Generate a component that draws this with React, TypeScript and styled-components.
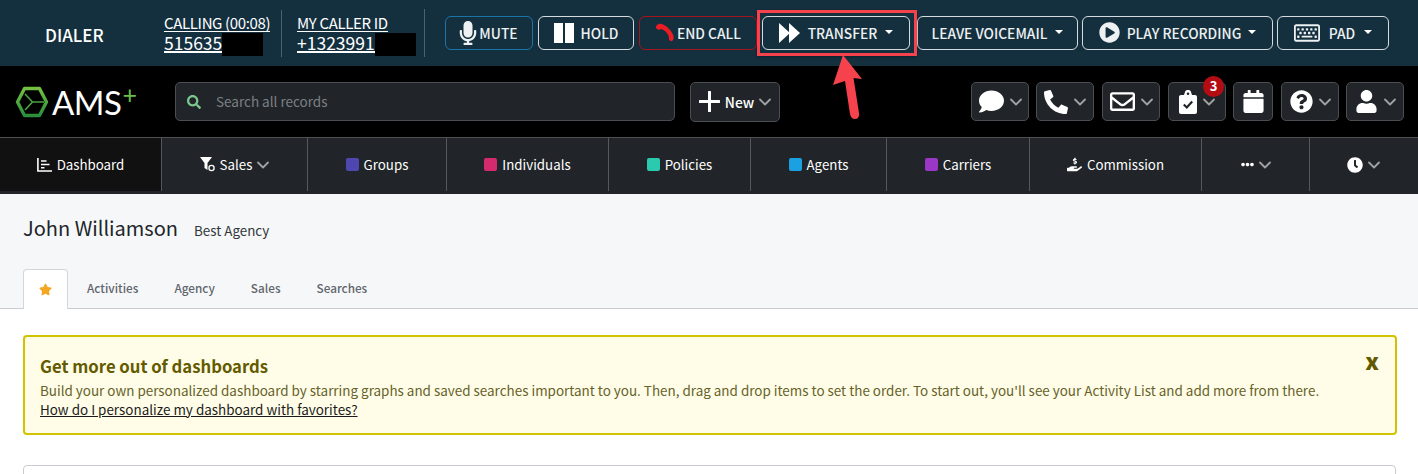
import React from "react";
import styled, { createGlobalStyle } from "styled-components";
import {
  FaCalendar,
  FaClock,
  FaComment,
  FaEllipsisH,
  FaHandHoldingUsd,
  FaMicrophone,
  FaPhone,
  FaPlayCircle,
  FaQuestionCircle,
  FaRegEnvelope,
  FaRegKeyboard,
  FaSearch,
  FaStar,
  FaUser,
} from "react-icons/fa";
import { ChevronDown } from "lucide-react";

const sans = `"Noto Sans CJK SC", "Source Sans Pro", "Noto Sans", sans-serif`;

const GlobalStyle = createGlobalStyle`
  html, body { margin: 0; padding: 0; background: #fff; }
  body { font-family: ${sans}; width: 1418px; height: 474px; overflow: hidden; }
  * { box-sizing: border-box; }
`;

const Page = styled.div`
  position: relative;
  width: 1418px;
  height: 474px;
  overflow: hidden;
`;

const DialerBar = styled.div`
  height: 66px;
  background: #14303f;
  display: flex;
  align-items: center;
  color: #fff;
`;

const DialerTitle = styled.div`
  width: 164px;
  padding-left: 45px;
  font-size: 17px;
  line-height: 20px;
  font-weight: 500;
  margin-top: 3px;
`;

const CallInfo = styled.div<{ $w: number }>`
  width: ${(p) => p.$w}px;
  height: 47px;
  padding-top: 4px;
  flex: none;
  & + & {
    border-left: 1px solid #4b626d;
    padding-left: 15px;
  }
`;

const InfoLabel = styled.div`
  font-size: 15px;
  letter-spacing: -0.35px;
  line-height: 18px;
  span {
    border-bottom: 1.5px solid #fff;
    display: inline-block;
    height: 18px;
  }
`;

const InfoValue = styled.div`
  display: flex;
  font-size: 17.5px;
  line-height: 21px;
  height: 22px;
  span {
    border-bottom: 2px solid #fff;
    height: 21px;
  }
`;

const Redacted = styled.i`
  display: block;
  width: 41px;
  height: 23px;
  margin-top: 1px;
  background: #000;
`;

const DialerDivider = styled.div`
  width: 1px;
  height: 48px;
  background: #4b626d;
  margin-right: 20px;
  flex: none;
`;

const CallButtons = styled.div`
  display: flex;
  gap: 5px;
  margin-top: -1px;
`;

const CallButton = styled.div<{ $w: number; $tone?: string; $gap?: number; $ml?: number }>`
  width: ${(p) => p.$w}px;
  height: 34px;
  flex: none;
  margin-left: ${(p) => p.$ml ?? 0}px;
  border: 1px solid ${(p) => p.$tone || "#d5dbde"};
  border-radius: 6px;
  display: flex;
  align-items: center;
  justify-content: center;
  gap: ${(p) => p.$gap ?? 8}px;
  font-size: 13.8px;
  font-weight: 500;
  color: #eef1f2;
  svg {
    flex: none;
  }
`;

const MicIcon = styled(FaMicrophone)`
  margin: 0 -4px;
`;

const Caret = styled.b`
  width: 0;
  height: 0;
  border-left: 4px solid transparent;
  border-right: 4px solid transparent;
  border-top: 4px solid #fff;
  margin-top: -2px;
`;

const HoldBars = styled.span`
  display: flex;
  gap: 2px;
  i {
    display: block;
    width: 9px;
    height: 20px;
    background: #fff;
  }
`;

const TopHeader = styled.div`
  height: 71px;
  background: #000;
  display: flex;
  align-items: center;
  padding-left: 15px;
`;

const Logo = styled.div`
  width: 160px;
  flex: none;
  display: flex;
  align-items: center;
  gap: 3px;
  color: #fff;
  font-family: Lato, sans-serif;
  font-size: 33px;
  line-height: 40px;
  letter-spacing: -0.5px;
`;

const LogoPlus = styled.span`
  color: #6cbd45;
  font-size: 25px;
  font-weight: 400;
  line-height: 20px;
  align-self: flex-start;
  margin: 2px 0 0 -2px;
`;

const SearchBox = styled.div`
  width: 500px;
  height: 39px;
  background: #212529;
  border: 1px solid #4a4e52;
  border-radius: 5px;
  display: flex;
  align-items: center;
  gap: 15px;
  padding: 0 0 2px 11px;
  color: #7c8084;
  font-size: 13.5px;
  svg {
    color: #7cc78d;
    margin-top: 2px;
  }
`;

const NewButton = styled.div`
  width: 90px;
  height: 40px;
  margin-left: 15px;
  background: #212529;
  border: 1px solid #4a4e52;
  border-radius: 5px;
  display: flex;
  align-items: center;
  justify-content: center;
  gap: 5px;
  color: #fff;
  font-size: 13.8px;
  font-weight: 500;
`;

const HeaderIcons = styled.div`
  margin-left: auto;
  margin-right: 14px;
  display: flex;
  gap: 7px;
`;

const IconButton = styled.div<{ $w?: number; $ml?: number }>`
  position: relative;
  width: ${(p) => p.$w ?? 58}px;
  height: 39px;
  margin-left: ${(p) => p.$ml ?? 0}px;
  background: #212529;
  border: 1px solid #4a4e52;
  border-radius: 5px;
  display: flex;
  align-items: center;
  justify-content: center;
  gap: 6px;
  color: #fff;
`;

const Badge = styled.span`
  position: absolute;
  top: -7px;
  right: 1px;
  width: 21px;
  height: 21px;
  border-radius: 50%;
  background: #b30d13;
  color: #fff;
  font-size: 13px;
  font-weight: 700;
  line-height: 20px;
  text-align: center;
`;

const FlippedPhone = styled(FaPhone)`
  transform: scaleX(-1);
`;

const Nav = styled.nav`
  height: 57px;
  background: #212529;
  border-top: 1px solid #4e5154;
  display: flex;
`;

const NavItem = styled.div<{ $w: number; $active?: boolean; $last?: boolean }>`
  width: ${(p) => p.$w}px;
  flex: none;
  height: 53px;
  display: flex;
  align-items: center;
  justify-content: center;
  gap: 5px;
  color: #fff;
  font-size: 13.3px;
  background: ${(p) => (p.$active ? "#111" : "transparent")};
  border-right: 1px solid ${(p) => (p.$last ? "transparent" : "#55585b")};
`;

const Swatch = styled.i<{ $color: string }>`
  display: block;
  width: 13px;
  height: 13px;
  border-radius: 2px;
  background: ${(p) => p.$color};
`;

const Subheader = styled.div`
  height: 115px;
  background: #f6f7f9;
  border-bottom: 1px solid #c9ccd0;
  padding: 0 23px;
  display: flex;
  flex-direction: column;
`;

const TitleRow = styled.div`
  display: flex;
  align-items: baseline;
  gap: 16px;
  margin-top: 19px;
  height: 30px;
  line-height: 30px;
`;

const PersonName = styled.h1`
  margin: 0;
  font-size: 20px;
  font-weight: 400;
  color: #212529;
`;

const AgencyName = styled.span`
  font-size: 13.4px;
  color: #33373b;
`;

const Tabs = styled.div`
  display: flex;
  margin-top: auto;
  height: 40px;
  margin-bottom: -1px;
`;

const Tab = styled.div<{ $active?: boolean }>`
  height: 37px;
  display: flex;
  align-items: center;
  justify-content: center;
  font-size: 11.75px;
  font-weight: 500;
  color: #5f656c;
  padding: 0 18px;
  ${(p) =>
    p.$active
      ? `width: 45px; height: 40px; padding: 0; background: #fff; border: 1px solid #d3d6da; border-bottom: none; border-radius: 4px 4px 0 0; color: #f5a623; margin-right: 1px;`
      : ""}
`;

const Alert = styled.section`
  position: relative;
  margin: 26px 21px 0 23px;
  height: 100px;
  background: #fffde7;
  border: 2px solid #d1c300;
  border-radius: 4px;
  padding: 17px 15px 0;
  color: #66622a;
`;

const AlertTitle = styled.h2`
  margin: 0 0 3px;
  font-size: 16.7px;
  line-height: 24px;
  font-weight: 700;
  color: #635a00;
`;

const AlertText = styled.p`
  margin: 0;
  font-size: 13.44px;
  line-height: 19px;
`;

const AlertLink = styled.a`
  display: block;
  font-size: 13.44px;
  line-height: 19px;
  color: #1b1b1b;
  text-decoration: underline;
`;

const CloseX = styled.span`
  position: absolute;
  top: 11px;
  right: 16px;
  font-size: 23px;
  line-height: 24px;
  font-weight: 900;
  color: #635a00;
`;

const NextCard = styled.div`
  margin: 30px 22px 0 23px;
  height: 40px;
  background: #fff;
  border: 1px solid #c9ccd0;
  border-radius: 4px;
`;

const Highlight = styled.div`
  position: absolute;
  left: 757px;
  top: 10px;
  width: 160px;
  height: 46px;
  border: 3px solid #f5424c;
  box-shadow: 0 1px 3px rgba(0, 0, 0, 0.35);
  pointer-events: none;
`;

const Arrow = styled.svg`
  position: absolute;
  left: 830px;
  top: 54px;
`;

const ChevronGlyph = styled(ChevronDown)`
  margin: 0 -4px;
  flex: none;
`;

const Chevron = () => <ChevronGlyph size={20} color="#a0a3a6" strokeWidth={2.2} />;

export default function App() {
  return (
    <Page>
      <GlobalStyle />
      <DialerBar>
        <DialerTitle>DIALER</DialerTitle>
        <CallInfo $w={117}>
          <InfoLabel>
            <span>CALLING (00:08)</span>
          </InfoLabel>
          <InfoValue>
            <span>515635</span>
            <Redacted />
          </InfoValue>
        </CallInfo>
        <CallInfo $w={143}>
          <InfoLabel>
            <span>MY CALLER ID</span>
          </InfoLabel>
          <InfoValue>
            <span>+1323991</span>
            <Redacted />
          </InfoValue>
        </CallInfo>
        <DialerDivider />
        <CallButtons>
          <CallButton $w={88} $tone="#1b74a8" $gap={3}>
            <MicIcon size={24} />
            MUTE
          </CallButton>
          <CallButton $w={96} $gap={7}>
            <HoldBars>
              <i />
              <i />
            </HoldBars>
            HOLD
          </CallButton>
          <CallButton $w={118} $tone="#a3141c" $gap={2}>
            <svg width="20" height="19" viewBox="0 0 20 19">
              <path
                d="M1 4 C1 2 4 0 7 1 C12 3 17 8 18.5 13 C19 15 18.5 17.5 17 18 C15 18.5 13.5 17 14 15 C14 12 11 8 7.5 6.5 C5 6 4 7 2.5 6.5 C1.5 6 1 5 1 4 Z"
                fill="#ec1c24"
              />
            </svg>
            END CALL
          </CallButton>
          <CallButton $w={148}>
            <svg width="21" height="20" viewBox="0 0 21 20">
              <path d="M0 0 L11 10 L0 20 Z M10 0 L21 10 L10 20 Z" fill="#fff" />
            </svg>
            TRANSFER
            <Caret />
          </CallButton>
          <CallButton $w={161} $ml={2}>
            LEAVE VOICEMAIL
            <Caret />
          </CallButton>
          <CallButton $w={191} $ml={-1} $gap={7}>
            <FaPlayCircle size={21} />
            PLAY RECORDING
            <Caret />
          </CallButton>
          <CallButton $w={112} $ml={-1} $gap={9}>
            <FaRegKeyboard size={26} />
            PAD
            <Caret />
          </CallButton>
        </CallButtons>
      </DialerBar>

      <TopHeader>
        <Logo>
          <svg width="34" height="32" viewBox="0 0 34 32">
            <defs>
              <linearGradient id="hexGreen" x1="0" y1="0" x2="0" y2="1">
                <stop offset="0" stopColor="#74c043" />
                <stop offset="1" stopColor="#2c8f3c" />
              </linearGradient>
            </defs>
            <path d="M9.5 2.5 H24.5 L31.5 16 L24.5 29.5 H9.5 L2.5 16 Z" fill="none" stroke="url(#hexGreen)" strokeWidth="3.4" strokeLinejoin="round" />
            <path d="M10 8 L17.5 16 L10 24 M17.5 16 H29" fill="none" stroke="#4aa33f" strokeWidth="1.6" />
          </svg>
          AMS
          <LogoPlus>+</LogoPlus>
        </Logo>
        <SearchBox>
          <FaSearch size={14} />
          Search all records
        </SearchBox>
        <NewButton>
          <svg width="21" height="21" viewBox="0 0 21 21">
            <path d="M10.5 1 V20 M1 10.5 H20" fill="none" stroke="#fff" strokeWidth="3" strokeLinecap="round" />
          </svg>
          New
          <Chevron />
        </NewButton>
        <HeaderIcons>
          <IconButton>
            <FaComment size={25} />
            <Chevron />
          </IconButton>
          <IconButton>
            <FlippedPhone size={24} />
            <Chevron />
          </IconButton>
          <IconButton $ml={1}>
            <FaRegEnvelope size={25} />
            <Chevron />
          </IconButton>
          <IconButton $ml={1}>
            <svg width="18" height="24" viewBox="0 0 18 24">
              <path
                fillRule="evenodd"
                d="M2 5 H5 L6 2 C6.3 0.6 7.5 0 9 0 C10.5 0 11.7 0.6 12 2 L13 5 H16 C17.2 5 18 5.8 18 7 V22 C18 23.2 17.2 24 16 24 H2 C0.8 24 0 23.2 0 22 V7 C0 5.8 0.8 5 2 5 Z M9 2.4 A1.3 1.3 0 1 0 9 5 A1.3 1.3 0 1 0 9 2.4 Z"
                fill="#fff"
              />
              <path d="M4.8 14.5 L7.8 17.5 L13.2 11.5" fill="none" stroke="#212529" strokeWidth="2.2" />
            </svg>
            <Chevron />
            <Badge>3</Badge>
          </IconButton>
          <IconButton $w={40}>
            <FaCalendar size={23} />
          </IconButton>
          <IconButton $ml={1}>
            <FaQuestionCircle size={23} />
            <Chevron />
          </IconButton>
          <IconButton>
            <FaUser size={23} />
            <Chevron />
          </IconButton>
        </HeaderIcons>
      </TopHeader>

      <Nav>
        <NavItem $w={162} $active>
          <svg width="15" height="14" viewBox="0 0 15 14">
            <path d="M0.9 0 V13 H15 M4 3 H9.5 M4 6.5 H12.5 M4 9.8 H7.5" fill="none" stroke="#fff" strokeWidth="1.6" />
          </svg>
          Dashboard
        </NavItem>
        <NavItem $w={146}>
          <svg width="15" height="15" viewBox="0 0 15 15">
            <path d="M0 0 H12 L7.5 6 V13 L4.5 11 V6 Z" fill="#fff" />
            <circle cx="11.5" cy="11" r="2.6" fill="none" stroke="#fff" strokeWidth="1.3" />
          </svg>
          Sales
          <Chevron />
        </NavItem>
        <NavItem $w={139}>
          <Swatch $color="#4e47b0" />
          Groups
        </NavItem>
        <NavItem $w={162}>
          <Swatch $color="#d62a6e" />
          Individuals
        </NavItem>
        <NavItem $w={142}>
          <Swatch $color="#2bc9ae" />
          Policies
        </NavItem>
        <NavItem $w={136}>
          <Swatch $color="#1ba1e2" />
          Agents
        </NavItem>
        <NavItem $w={143}>
          <Swatch $color="#9a37c4" />
          Carriers
        </NavItem>
        <NavItem $w={172}>
          <FaHandHoldingUsd size={15} />
          Commission
        </NavItem>
        <NavItem $w={108}>
          <FaEllipsisH size={13} />
          <Chevron />
        </NavItem>
        <NavItem $w={108} $last>
          <FaClock size={16} />
          <Chevron />
        </NavItem>
      </Nav>

      <Subheader>
        <TitleRow>
          <PersonName>John Williamson</PersonName>
          <AgencyName>Best Agency</AgencyName>
        </TitleRow>
        <Tabs>
          <Tab $active>
            <FaStar size={13} />
          </Tab>
          <Tab>Activities</Tab>
          <Tab>Agency</Tab>
          <Tab>Sales</Tab>
          <Tab>Searches</Tab>
        </Tabs>
      </Subheader>

      <Alert>
        <AlertTitle>Get more out of dashboards</AlertTitle>
        <AlertText>
          Build your own personalized dashboard by starring graphs and saved searches important to you. Then, drag and drop items to set the order. To start out, you'll see your Activity List and add more from there.
        </AlertText>
        <AlertLink>How do I personalize my dashboard with favorites?</AlertLink>
        <CloseX>x</CloseX>
      </Alert>
      <NextCard />

      <Highlight />
      <Arrow width="40" height="70" viewBox="0 0 40 70">
        <path d="M13 1 L32 25 L23.5 24 L29 59 Q29.5 65 25 65 Q21 65 20 60 L15 27 L3 31 Z" fill="#f5424c" />
      </Arrow>
    </Page>
  );
}
